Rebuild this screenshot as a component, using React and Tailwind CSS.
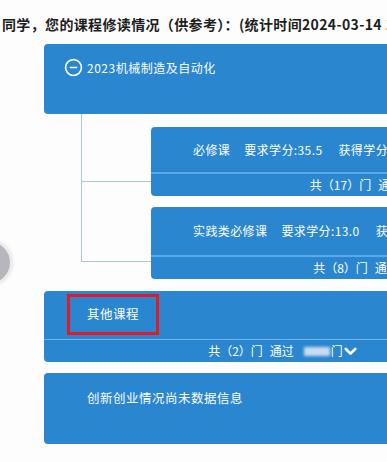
import { CircleMinus } from 'lucide-react';

const cjk = { fontFamily: '"Noto Sans CJK SC", "Noto Sans", sans-serif' };

function Chevron() {
  return (
    <svg width="13" height="9" viewBox="0 0 13 9" className="ml-[1px]">
      <path d="M1.8 2 L6.5 6.6 L11.2 2" fill="none" stroke="white" strokeWidth="2.7" strokeLinecap="round" strokeLinejoin="round" />
    </svg>
  );
}

function Footer({ total }) {
  return (
    <div className="h-[22px] flex items-center justify-center text-[12px] text-white whitespace-nowrap">
      <span>共（{total}）门</span>
      <span className="ml-[7px]">通过</span>
      <span className="ml-[10px] w-[26px] h-[9px] bg-[#c9dcef] blur-[1.5px]" />
      <span className="ml-[1px]">门</span>
      <Chevron />
    </div>
  );
}

function SubBox({ title, need, top, total }) {
  return (
    <div className="w-[473px] rounded-[4px] bg-[#2a86cf] text-white">
      <div className="flex items-center pl-[42px] text-[12px] tracking-[0.4px] whitespace-nowrap" style={{ height: top }}>
        <span>{title}</span>
        <span className="ml-[14px]">要求学分:{need}</span>
        <span className="ml-[16px]">获得学分:{need}</span>
      </div>
      <div className="h-[2px] bg-[#5aaaea]" />
      <Footer total={total} />
    </div>
  );
}

export default function App() {
  return (
    <div className="relative w-[387px] h-[462px] overflow-hidden bg-[#fdfdfd]" style={cjk}>
      {/* header */}
      <div className="h-[44px] pt-[11px] flex items-start whitespace-nowrap">
        <div className="w-[12px] h-[23px] bg-[#b4b4b4] blur-[1.5px]" />
        <div className="ml-[2px] text-[14px] leading-[26px] font-bold tracking-[0.35px] text-[#1e1e1e]">
          同学，您的课程修读情况（供参考）：(统计时间2024-03-14 13:20)
        </div>
      </div>

      {/* major */}
      <div className="ml-[44px] w-[477px] h-[70px] rounded-[4px] bg-[#2a86cf] text-white">
        <div className="flex items-center pl-[20px] pt-[14px] gap-[4px] text-[12px] tracking-[0.5px] whitespace-nowrap">
          <CircleMinus size={19} strokeWidth={2} />
          <span>2023机械制造及自动化</span>
        </div>
      </div>

      {/* tree */}
      <div className="ml-[81px] flex flex-col">
        <div className="flex">
          <div className="w-[70px] h-[93px] shrink-0 border-l border-[#a9c8e2] pt-[67px]">
            <div className="border-t border-[#a9c8e2]" />
          </div>
          <div className="mt-[13px]">
            <SubBox title="必修课" need="35.5" top={45} total="17" />
          </div>
        </div>
        <div className="flex">
          <div className="w-[70px] h-[55px] shrink-0 border-l border-b border-[#a9c8e2]" />
          <div>
            <SubBox title="实践类必修课" need="13.0" top={48} total="8" />
          </div>
        </div>
      </div>

      {/* other */}
      <div className="ml-[44px] mt-[12px] w-[477px] rounded-[4px] bg-[#2a86cf] text-white">
        <div className="h-[48px] pl-[23px] pt-[3px]">
          <div className="w-[92px] h-[41px] border-[3px] border-[#e3192b] flex items-center pl-[17px] text-[12.5px] tracking-[0.5px]">
            其他课程
          </div>
        </div>
        <div className="h-px bg-[#6ab4ee]" />
        <Footer total="2" />
      </div>

      {/* innovation */}
      <div className="ml-[44px] mt-[11px] w-[477px] h-[71px] rounded-[4px] bg-[#2a86cf] text-white">
        <div className="pl-[43px] pt-[16px] text-[12.5px] tracking-[0.5px] whitespace-nowrap">创新创业情况尚未数据信息</div>
      </div>

      {/* floating button */}
      <div className="absolute left-[-33px] top-[240px] w-[45px] h-[45px] rounded-full bg-[#b6b6bc] border-2 border-[#ececec] shadow-[0_0_4px_rgba(0,0,0,0.15)]" />
    </div>
  );
}
